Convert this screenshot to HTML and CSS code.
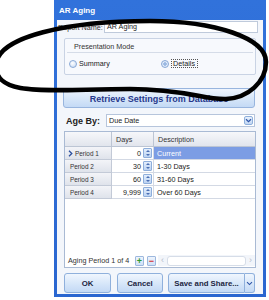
FILE: index.html
```html
<!DOCTYPE html>
<html lang="en">
<head>
    <meta charset="UTF-8">
    <title>AR Aging</title>
    <link rel="stylesheet" href="styles.css">
</head>
<body>
    <div class="dialog">
        <div class="titlebar">AR Aging</div>
        <div class="panel">
            <div class="name-row">
                <label>Report Name:</label>
                <div class="textbox">AR Aging</div>
            </div>

            <div class="group">
                <div class="group-title">Presentation Mode</div>
                <div class="radios">
                    <span class="radio"><i class="dot"></i>Summary</span>
                    <span class="radio checked"><i class="dot"></i><span class="focus">Details</span></span>
                </div>
            </div>

            <div class="retrieve">Retrieve Settings from Database</div>

            <div class="age-row">
                <span class="age-label">Age By:</span>
                <div class="combo">
                    <span>Due Date</span>
                    <span class="combo-btn">
                        <svg width="7" height="5" viewBox="0 0 7 5"><path d="M1 1.2 L3.5 3.6 L6 1.2" fill="none" stroke="#2f55a8" stroke-width="1.2"/></svg>
                    </span>
                </div>
            </div>

            <div class="grid">
                <div class="row head">
                    <div class="cell rh"></div>
                    <div class="cell days">Days</div>
                    <div class="cell desc">Description</div>
                </div>
                <div class="row">
                    <div class="cell rh"><svg class="cur" width="5" height="7" viewBox="0 0 5 7"><path d="M1 0.8 L3.8 3.5 L1 6.2" fill="none" stroke="#2a4f9e" stroke-width="1.3"/></svg>Period 1</div>
                    <div class="cell days"><span class="num">0</span><span class="spin"></span></div>
                    <div class="cell desc selected">Current</div>
                </div>
                <div class="row">
                    <div class="cell rh">Period 2</div>
                    <div class="cell days"><span class="num">30</span><span class="spin"></span></div>
                    <div class="cell desc">1-30 Days</div>
                </div>
                <div class="row">
                    <div class="cell rh">Period 3</div>
                    <div class="cell days"><span class="num">60</span><span class="spin"></span></div>
                    <div class="cell desc">31-60 Days</div>
                </div>
                <div class="row">
                    <div class="cell rh">Period 4</div>
                    <div class="cell days"><span class="num">9,999</span><span class="spin"></span></div>
                    <div class="cell desc">Over 60 Days</div>
                </div>
                <div class="grid-empty"></div>
                <div class="grid-footer">
                    <span class="pager">Aging Period 1 of 4</span>
                    <span class="mini plus">+</span>
                    <span class="mini minus">&minus;</span>
                    <div class="hscroll">
                        <span class="arrow">&lsaquo;</span>
                        <span class="thumb"></span>
                        <span class="arrow">&rsaquo;</span>
                    </div>
                </div>
            </div>

            <div class="buttons">
                <div class="btn ok">OK</div>
                <div class="btn cancel">Cancel</div>
                <div class="btn save">Save and Share...</div>
                <div class="btn drop">
                    <svg width="7" height="5" viewBox="0 0 7 5"><path d="M1 1.2 L3.5 3.6 L6 1.2" fill="none" stroke="#2f55a8" stroke-width="1.1"/></svg>
                </div>
            </div>
        </div>
    </div>

    <!-- hand drawn circle over the presentation mode box -->
    <svg class="scribble" width="269" height="300" viewBox="0 0 269 300">
        <path d="M-4 66 C-4 36, 70 21, 150 21 C 215 21, 266 38, 266 62 C 266 82, 248 98, 226 99 C 205 100, 185 89, 130 89 C 50 89, -4 98, -4 66 Z" fill="none" stroke="#000" stroke-width="4.5"/>
    </svg>
</body>
</html>
```

FILE: styles.css
```css
body {
    margin: 0;
    background: #fff;
    font-family: "Liberation Sans", Arial, sans-serif;
    font-size: 7.2px;
    color: #222;
    position: relative;
}

.dialog {
    margin-left: 54px;
    width: 212px;
    height: 297px;
    box-sizing: border-box;
    padding: 0 3px 3px;
    background: linear-gradient(#3172db, #2a66d0);
    display: flex;
    flex-direction: column;
}

.titlebar {
    height: 20px;
    line-height: 22px;
    padding-left: 2px;
    color: #fff;
    font-weight: bold;
    font-size: 8px;
}

.panel {
    flex: 1;
    background: #f3f6fb;
    padding-top: 1px;
}

/* report name */
.name-row {
    display: flex;
    align-items: center;
    height: 12px;
    padding-left: 1px;
}

.name-row label {
    width: 46px;
    color: #333;
}

.textbox {
    width: 154px;
    height: 12px;
    box-sizing: border-box;
    border: 1px solid #bfcadb;
    background: #fff;
    padding-left: 2px;
    line-height: 10px;
}

/* presentation mode */
.group {
    margin: 5px 7px 0;
    border: 1px solid #c9d3e4;
    border-radius: 2px;
    background: #f7f9fd;
}

.group-title {
    height: 13px;
    line-height: 15px;
    padding-left: 7px;
    margin: 0 2px;
    border-bottom: 1px solid #d5dce8;
    color: #333;
}

.radios {
    height: 21px;
    display: flex;
    align-items: center;
    padding-left: 4px;
}

.radio {
    width: 92px;
    display: flex;
    align-items: center;
}

.dot {
    width: 6px;
    height: 6px;
    margin-right: 2px;
    border: 1px solid #8aa9d6;
    border-radius: 50%;
    background: radial-gradient(circle at 40% 35%, #fff, #c3d8f3);
}

.checked .dot {
    background: radial-gradient(circle, #9ab8e2 0 1.5px, #e9f1fc 2px, #c3d8f3);
}

.focus {
    border: 1px dotted #555;
    padding: 0 2px 0 1px;
    line-height: 7px;
}

/* retrieve */
.retrieve {
    margin: 13px 8px 0 6px;
    height: 20px;
    box-sizing: border-box;
    border: 1px solid #98b5de;
    border-radius: 3px;
    background: linear-gradient(#eef5fe, #d8e7f9 50%, #c4daf5);
    text-align: center;
    line-height: 20px;
    font-weight: bold;
    font-size: 9px;
    color: #27388c;
}

/* age by */
.age-row {
    margin-top: 6px;
    display: flex;
    align-items: center;
    height: 13px;
}

.age-label {
    width: 40px;
    padding-left: 9px;
    font-weight: bold;
    font-size: 9px;
    color: #222;
}

.combo {
    width: 149px;
    height: 13px;
    box-sizing: border-box;
    border: 1px solid #b6c5dc;
    background: #fff;
    display: flex;
    align-items: center;
    justify-content: space-between;
    padding: 0 1px 0 2px;
}

.combo-btn {
    width: 9px;
    height: 9px;
    box-sizing: border-box;
    border: 1px solid #8fb0dc;
    border-radius: 2px;
    background: linear-gradient(#e8f1fd, #c2d7f3);
    display: flex;
    align-items: center;
    justify-content: center;
}

/* grid */
.grid {
    margin: 4px 7px 0;
    height: 137px;
    box-sizing: border-box;
    border: 1px solid #a9bad4;
    background: #fff;
    display: flex;
    flex-direction: column;
}

.row {
    display: grid;
    grid-template-columns: 47px 42px 1fr;
    height: 13px;
}

.row.head {
    height: 15px;
}

.cell {
    box-sizing: border-box;
    border-right: 1px solid #d3d9e4;
    border-bottom: 1px solid #d3d9e4;
    display: flex;
    align-items: center;
    white-space: nowrap;
    overflow: hidden;
}

.head .cell {
    background: linear-gradient(#f6f7fa, #e1e5ed);
    border-color: #bcc5d4;
    padding-left: 4px;
    color: #333;
}

.rh {
    background: linear-gradient(#f3f4f8, #dfe3eb);
    border-color: #c3cad7;
    padding-left: 5px;
    font-size: 6.4px;
    color: #333;
}

.cur {
    margin: 0 2px 0 -2px;
}

.days {
    justify-content: flex-end;
    padding-right: 1px;
}

.head .days {
    justify-content: flex-start;
}

.num {
    margin-right: 2px;
}

.spin {
    width: 9px;
    height: 10px;
    box-sizing: border-box;
    border: 1px solid #8eaedb;
    border-radius: 1px;
    background: linear-gradient(#e3eefc, #bcd3f2);
    position: relative;
}

.spin::before,
.spin::after {
    content: "";
    position: absolute;
    left: 2px;
    width: 0;
    height: 0;
    border-left: 2px solid transparent;
    border-right: 2px solid transparent;
}

.spin::before {
    top: 1px;
    border-bottom: 2px solid #4a6fb4;
}

.spin::after {
    bottom: 1px;
    border-top: 2px solid #4a6fb4;
}

.desc {
    padding-left: 3px;
    border-right: 0;
}

.desc.selected {
    background: #7c9de4;
    color: #fff;
}

.grid-empty {
    flex: 1;
}

.grid-footer {
    height: 13px;
    display: flex;
    align-items: center;
    padding-left: 3px;
}

.pager {
    width: 67px;
    color: #333;
}

.mini {
    width: 9px;
    height: 10px;
    box-sizing: border-box;
    border: 1px solid #9db8de;
    border-radius: 1px;
    background: linear-gradient(#eef4fd, #cfe0f6);
    font-weight: bold;
    font-size: 9px;
    line-height: 8px;
    text-align: center;
    margin-right: 3px;
}

.plus {
    color: #2d9a2d;
}

.minus {
    color: #d42b2b;
    margin-right: 2px;
}

.hscroll {
    flex: 1;
    height: 11px;
    display: flex;
    align-items: center;
    background: #f2f5fa;
}

.hscroll .arrow {
    width: 9px;
    text-align: center;
    color: #b3bccb;
    font-size: 9px;
    line-height: 9px;
}

.hscroll .thumb {
    flex: 1;
    height: 10px;
    box-sizing: border-box;
    border: 1px solid #d6dde8;
    border-radius: 3px;
    background: #fff;
}

/* bottom buttons */
.buttons {
    margin-top: 5px;
    padding-left: 7px;
    display: flex;
    height: 20px;
}

.btn {
    box-sizing: border-box;
    height: 20px;
    border: 1px solid #8fb0dc;
    border-radius: 3px;
    background: linear-gradient(#f0f6fe, #d6e6f9 55%, #c3d9f5);
    display: flex;
    align-items: center;
    justify-content: center;
    font-weight: bold;
    font-size: 7.8px;
    color: #1c2542;
}

.ok {
    width: 47px;
    margin-right: 6px;
}

.cancel {
    width: 46px;
    margin-right: 5px;
}

.save {
    width: 77px;
    border-radius: 3px 0 0 3px;
}

.drop {
    width: 10px;
    border-left: 0;
    border-radius: 0 3px 3px 0;
}

.scribble {
    position: absolute;
    left: 0;
    top: 0;
    pointer-events: none;
}
```
